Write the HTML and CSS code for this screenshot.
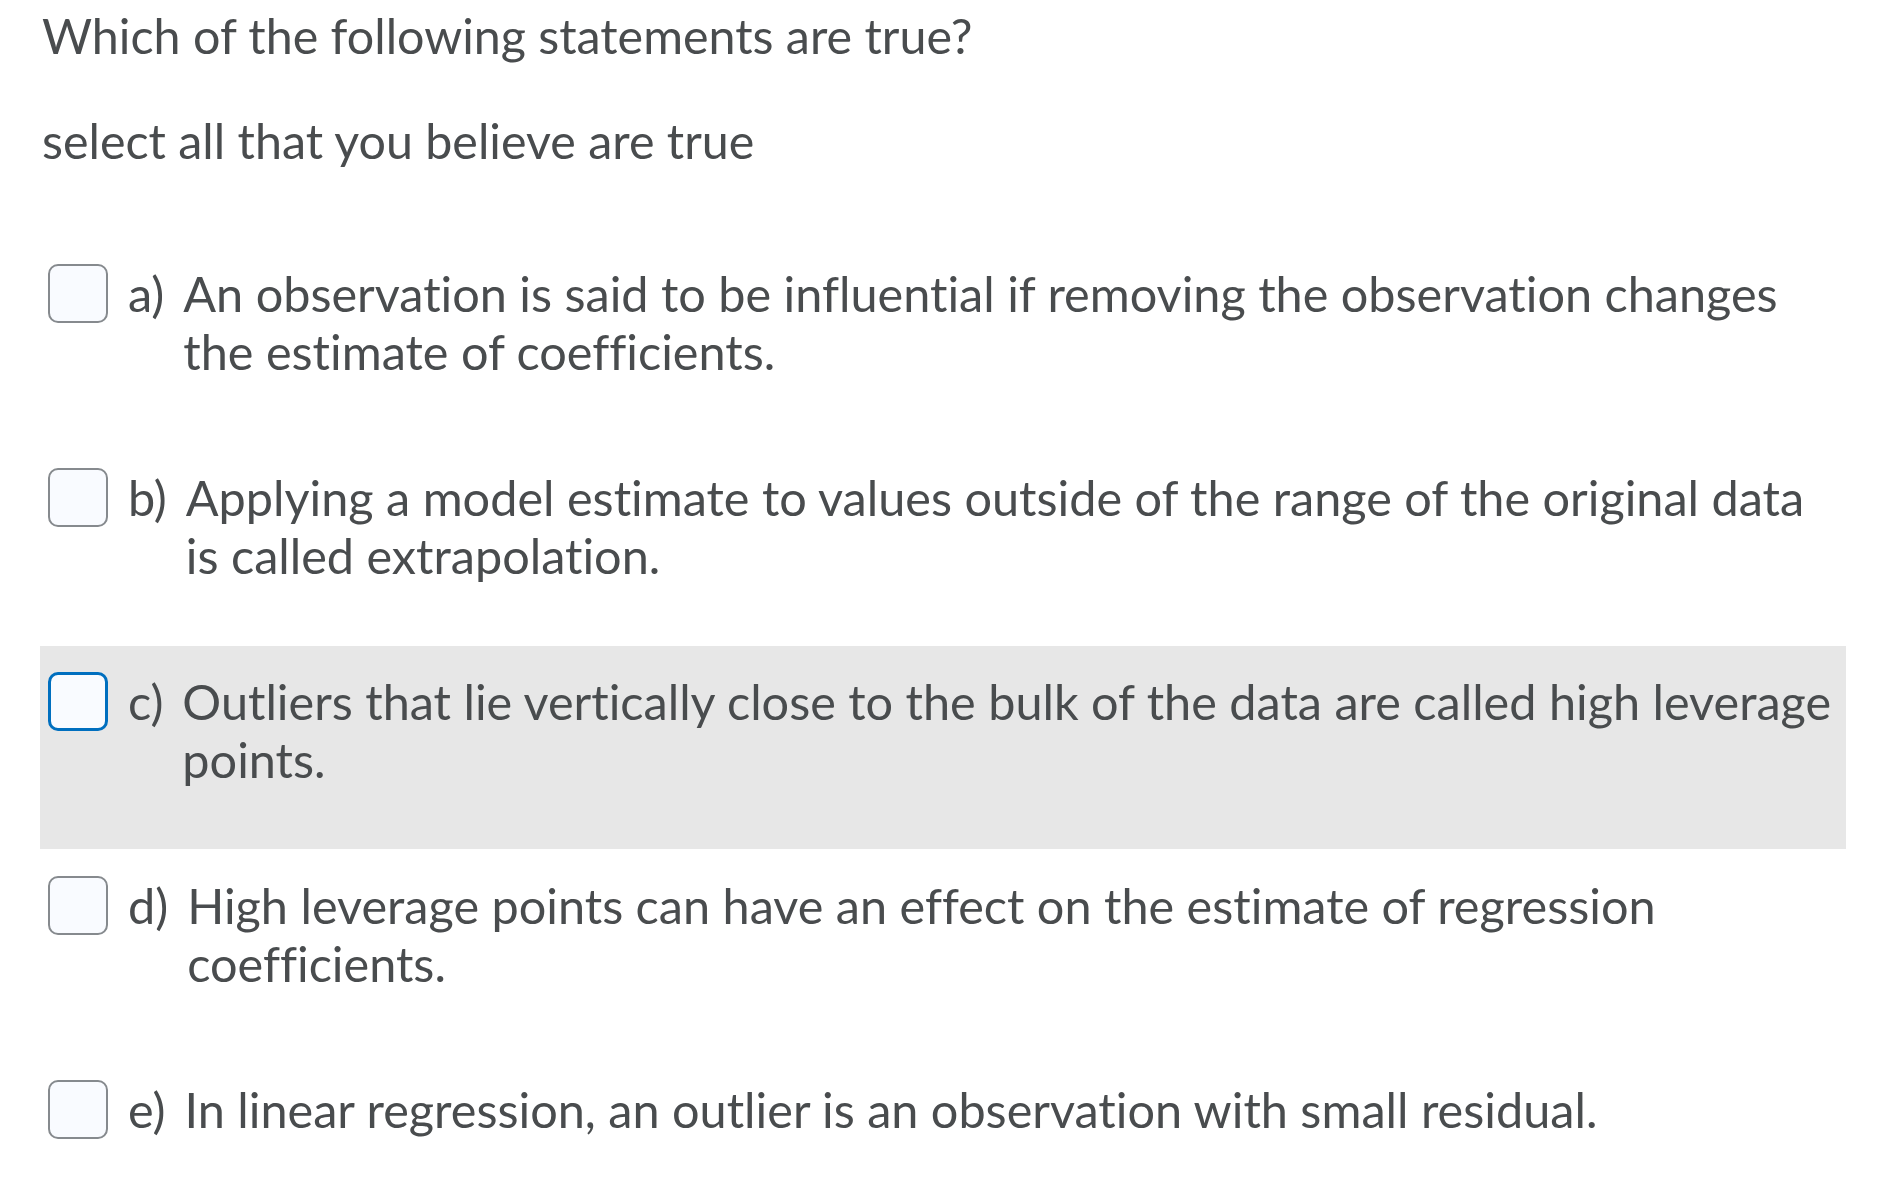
FILE: index.html
```html
<!DOCTYPE html>
<html lang="en">
<head>
<meta charset="utf-8">
<title>Question</title>
<link rel="stylesheet" href="styles.css">
</head>
<body>
<main class="question">
  <p class="prompt">Which of the following statements are true?</p>
  <p class="prompt instructions">select all that you believe are true</p>
  <ul class="choices">
    <li class="choice">
      <span class="box"></span>
      <span class="letter">a)</span>
      <span class="text">An observation is said to be influential if removing the observation changes the estimate of coefficients.</span>
    </li>
    <li class="choice">
      <span class="box"></span>
      <span class="letter">b)</span>
      <span class="text">Applying a model estimate to values outside of the range of the original data is called extrapolation.</span>
    </li>
    <li class="choice choice-hover">
      <span class="box box-focus"></span>
      <span class="letter">c)</span>
      <span class="text">Outliers that lie vertically close to the bulk of the data are called high leverage points.</span>
    </li>
    <li class="choice">
      <span class="box"></span>
      <span class="letter">d)</span>
      <span class="text">High leverage points can have an effect on the estimate of regression coefficients.</span>
    </li>
    <li class="choice">
      <span class="box"></span>
      <span class="letter">e)</span>
      <span class="text">In linear regression, an outlier is an observation with small residual.</span>
    </li>
  </ul>
</main>
</body>
</html>
```
FILE: styles.css
```css
html, body {
  margin: 0;
  padding: 0;
  background: #ffffff;
}

body {
  font-family: Lato, "Open Sans", sans-serif;
  font-size: 48.4px;
  line-height: 58px;
  color: #494c4e;
  font-variant-ligatures: none;
  font-feature-settings: "liga" 0, "clig" 0;
}

.question {
  padding: 6px 46px 0 40px;
}

.prompt {
  margin: 0;
  padding-left: 2px;
}

.instructions {
  margin-top: 47px;
}

.choices {
  list-style: none;
  margin: 69px 0 0 0;
  padding: 0;
  font-size: 48.6px;
}

.choice {
  display: flex;
  align-items: flex-start;
  height: 203px;
  box-sizing: border-box;
  padding: 26px 8px 0 8px;
  margin-bottom: 1px;
}

.choice-hover {
  background: #e7e7e7;
}

.box {
  flex: none;
  width: 60px;
  height: 59px;
  box-sizing: border-box;
  border: 2px solid #868a8e;
  border-radius: 10px;
  background: #f9fbff;
}

.box-focus {
  border: 3px solid #006fbf;
}

.letter {
  flex: none;
  margin-left: 20px;
  margin-right: 19px;
}

.text {
  flex: 1;
  min-width: 0;
}
```
